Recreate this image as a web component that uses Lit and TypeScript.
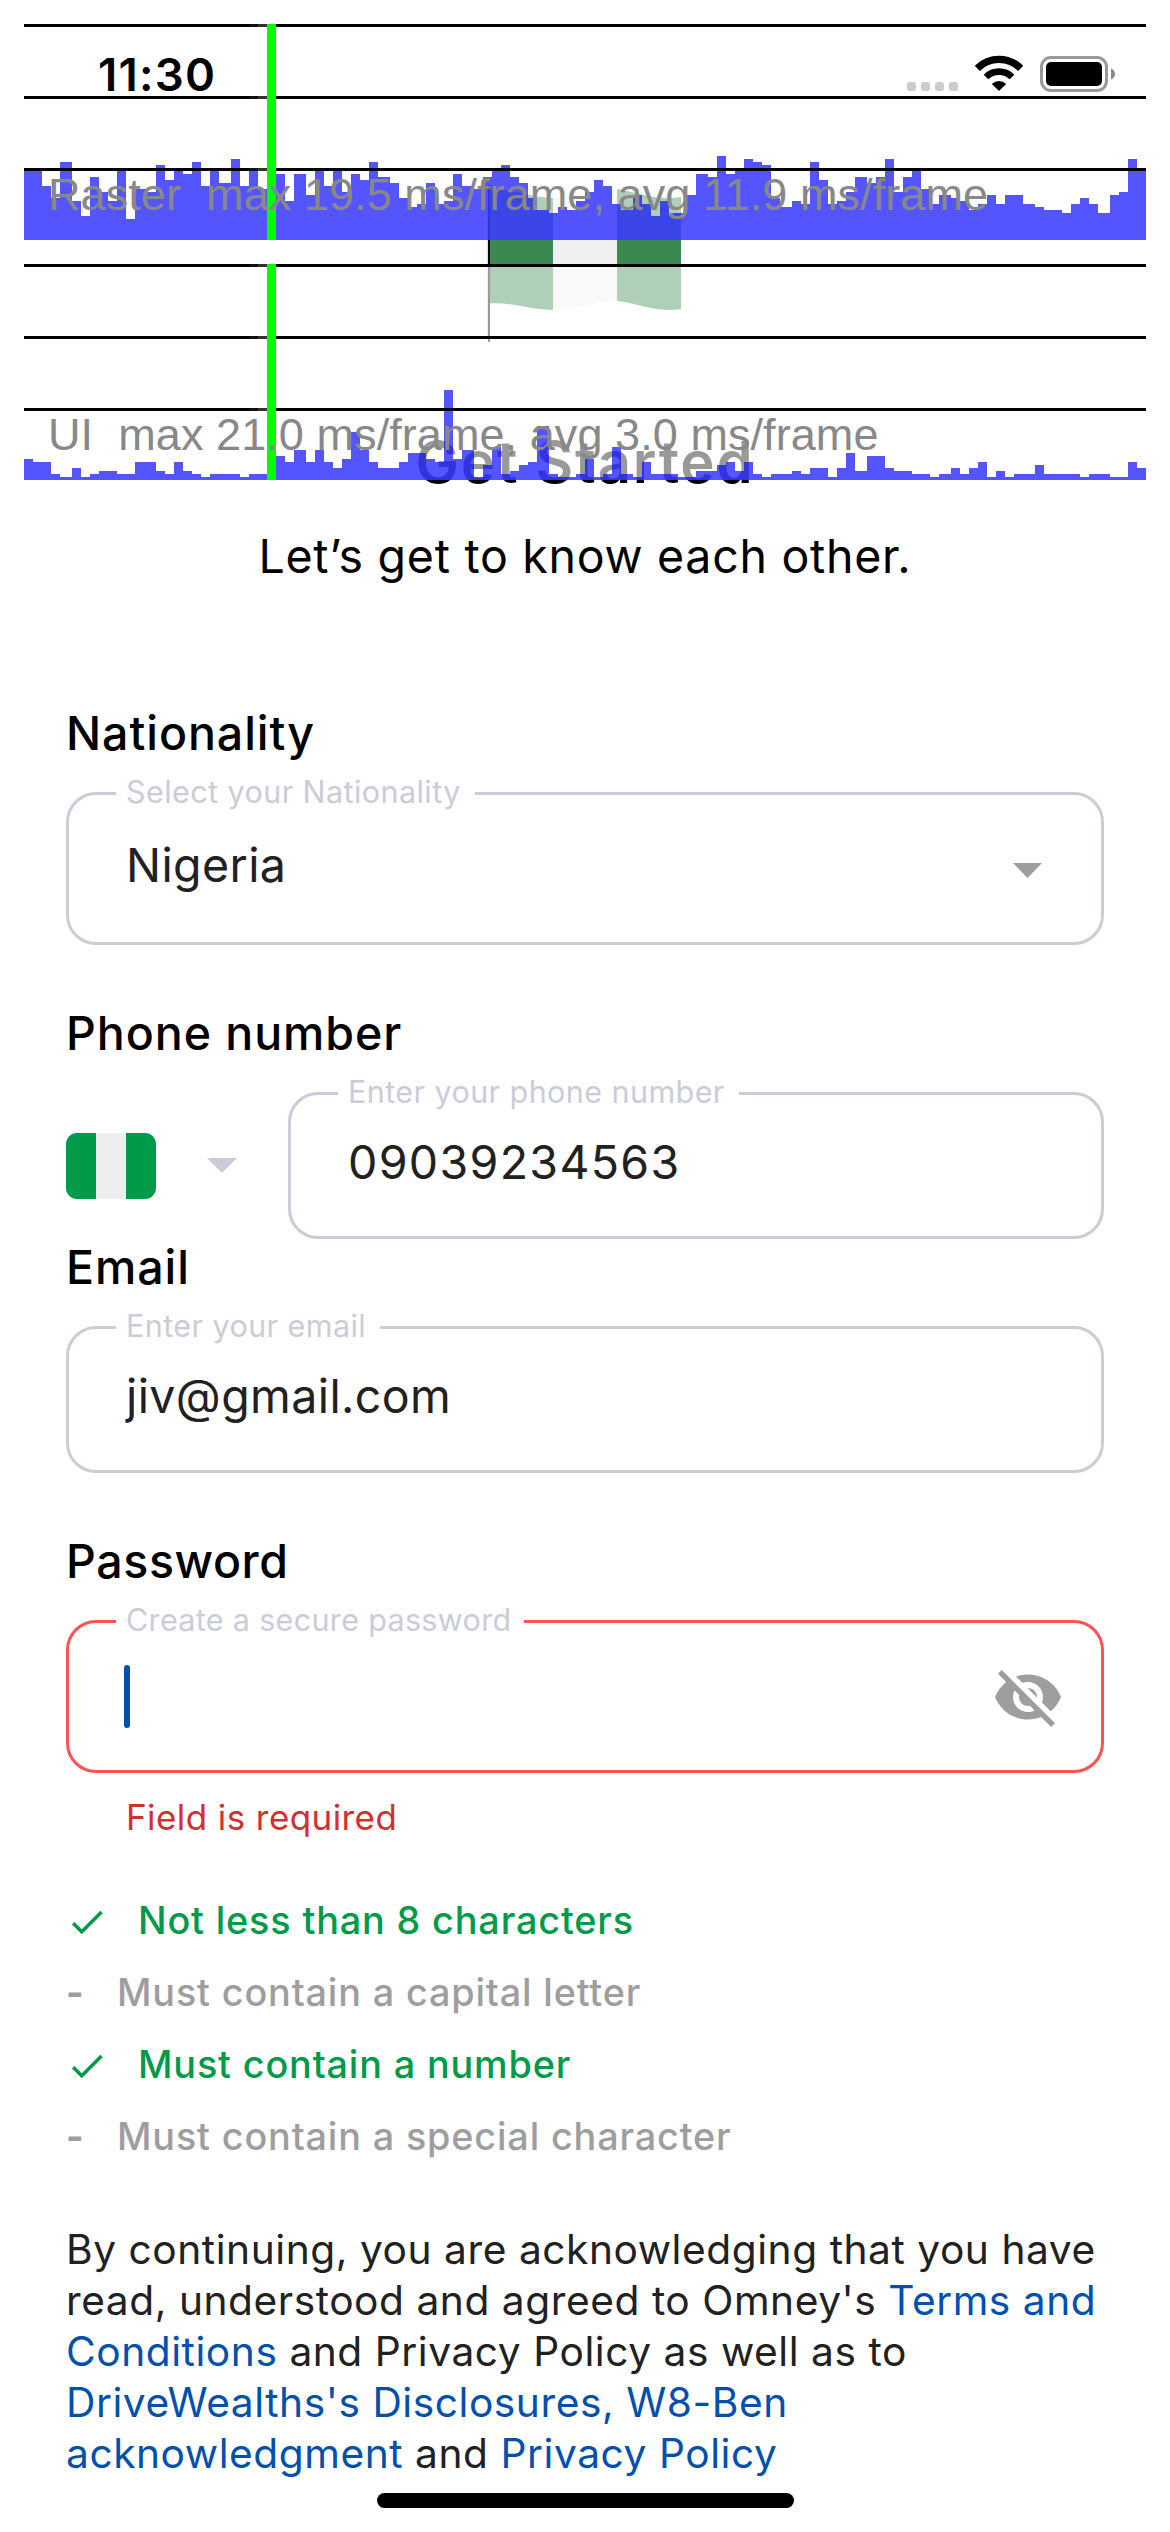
import { LitElement, html, svg, css } from "lit";
import { customElement, property } from "lit/decorators.js";
import { classMap } from "lit/directives/class-map.js";

const RASTER = [
  23, 23, 18, 14, 26, 13, 8, 21, 16, 13, 23, 7, 17, 16, 25, 20, 23, 22, 26, 18,
  23, 19, 27, 18, 23, 17, 0, 22, 13, 22, 15, 23, 18, 23, 16, 22, 20, 26, 21, 19,
  14, 11, 12, 19, 12, 13, 22, 18, 17, 21, 23, 25, 21, 19, 14, 10, 9, 11, 10, 13,
  16, 20, 18, 12, 10, 15, 12, 8, 13, 9, 9, 15, 22, 21, 28, 22, 23, 27, 26, 25,
  14, 11, 13, 12, 26, 20, 12, 13, 16, 21, 19, 21, 27, 16, 21, 23, 17, 12, 15, 14,
  13, 10, 12, 15, 12, 15, 15, 12, 11, 10, 10, 9, 12, 14, 12, 9, 15, 16, 27, 23,
];

const UI = [
  7, 6, 6, 2, 1, 4, 1, 2, 3, 3, 2, 2, 6, 6, 3, 2, 6, 3, 2, 1,
  2, 2, 2, 1, 2, 2, 0, 8, 6, 10, 6, 10, 6, 4, 7, 16, 10, 6, 4, 4,
  6, 9, 9, 7, 6, 30, 7, 10, 1, 5, 11, 2, 3, 5, 6, 18, 2, 1, 1, 2,
  7, 1, 2, 11, 2, 1, 6, 2, 2, 2, 1, 1, 3, 3, 5, 6, 3, 6, 2, 1,
  2, 2, 3, 2, 4, 4, 1, 4, 9, 3, 8, 8, 4, 3, 3, 2, 2, 1, 2, 4,
  2, 4, 6, 1, 3, 1, 2, 2, 5, 2, 2, 2, 2, 1, 2, 2, 1, 1, 6, 4,
];

const STEP = 1122 / 120;
const NOW = 26;
const snap = (i: number) => Math.round((i * STEP) / 3) * 3;

@customElement("frame-graph")
class FrameGraph extends LitElement {
  @property({ attribute: false }) samples: number[] = [];
  @property() label = "";

  static styles = css`
    :host { display: block; height: 216px; }
    svg { display: block; }
    .label { font: 45px "Liberation Sans", Arial, sans-serif; letter-spacing: 0.07px; fill: #888; white-space: pre; }
  `;

  render() {
    return html`<svg width="1122" height="216" viewBox="0 0 1122 216">
      <rect width="1122" height="216" fill="#fff" fill-opacity="0.6" />
      <g shape-rendering="crispEdges">
        ${this.samples.map((h, i) => svg`<rect x=${snap(i)} y=${216 - h * 3} width=${snap(i + 1) - snap(i)} height=${h * 3} fill="#00f" fill-opacity="0.667" />`)}
        ${[0, 72, 144].map((y) => svg`
          <rect x="0" y=${y} width="1122" height="3" fill="#000" />
          <rect x=${snap(NOW - 2)} y=${y} width="9" height="3" fill="#111" />
          <rect x=${snap(NOW - 1)} y=${y} width="9" height="3" fill="#333" />`)}
        <rect x=${snap(NOW)} y="0" width="9" height="216" fill="#0f0" />
      </g>
      <text class="label" x="24" y="186">${this.label}</text>
    </svg>`;
  }
}

@customElement("outlined-field")
class OutlinedField extends LitElement {
  @property() label = "";
  @property({ type: Boolean }) tall = false;
  @property({ type: Boolean }) error = false;

  static styles = css`
    :host { display: block; flex: 1; }
    .box {
      position: relative; box-sizing: border-box; display: flex; justify-content: space-between;
      height: 147px; padding: 39px 57px 0; border: 3px solid #caccd8; border-radius: 30px;
    }
    .box.tall { height: 153px; padding-top: 42px; }
    .box.error { border-color: #ff5252; padding-right: 37px; }
    .label {
      position: absolute; left: 47px; top: -22px; padding: 0 14px 0 10px; background: #fff;
      color: #caccd8; font-size: 30.5px; line-height: 37px; letter-spacing: 0.43px; white-space: nowrap;
    }
    .error .label { letter-spacing: 0.33px; padding-right: 13px; }
  `;

  render() {
    return html`<div class=${classMap({ box: true, tall: this.tall, error: this.error })}>
      <span class="label">${this.label}</span>
      <slot></slot>
    </div>`;
  }
}

const check = html`<svg class="check" width="42" height="42" viewBox="0 0 24 24" fill="currentColor">
  <path d="M9 16.17 4.83 12l-1.42 1.41L9 19 21 7l-1.41-1.41z" />
</svg>`;

const RULES = [
  { met: true, text: "Not less than 8 characters" },
  { met: false, text: "Must contain a capital letter" },
  { met: true, text: "Must contain a number" },
  { met: false, text: "Must contain a special character" },
];

@customElement("app-root")
class AppRoot extends LitElement {
  static styles = css`
    :host { display: block; }
    .page {
      position: relative; box-sizing: border-box; width: 1170px; height: 2532px; overflow: hidden;
      background: #fff; color: #000; font-family: Inter, "Liberation Sans", sans-serif;
      display: flex; flex-direction: column; font-kerning: normal;
    }
    .status {
      position: relative; z-index: 2; height: 184px; padding: 47px 55px 0 98px; box-sizing: border-box;
      display: flex; align-items: flex-start;
    }
    .time { font-size: 45.5px; line-height: 55px; font-weight: 600; letter-spacing: 1.27px; flex: 1; }
    .dots { display: flex; gap: 5px; margin: 35px 17px 0 0; }
    .dot { width: 9px; height: 9px; border-radius: 3px; background: #cbcbcb; }
    .wifi { margin: 8px 17px 0 0; }
    .battery { margin-top: 9px; }
    .overlay { position: absolute; z-index: 1; left: 24px; top: 24px; display: flex; flex-direction: column; gap: 24px; }
    .flag { display: block; margin: 0 0 0 486px; }
    h1 { margin: 85px 0 0; text-align: center; font-size: 58px; line-height: 70px; font-weight: 600; letter-spacing: 1.8px; }
    .sub { margin: 31px 0 0; text-align: center; font-size: 46.5px; line-height: 56px; letter-spacing: 0.72px; }
    form { margin: 121px 66px 0; display: flex; flex-direction: column; }
    h2 { margin: 0 0 31px; font-size: 46.5px; line-height: 56px; font-weight: 500; letter-spacing: 0.94px; }
    .gap { margin-top: 60px; }
    .snug { letter-spacing: 0.6px; }
    .value { font-size: 46.5px; line-height: 56px; color: #212121; letter-spacing: 0.4px; }
    .digits { letter-spacing: 1.32px; }
    .arrow { display: block; margin-top: 26px; margin-right: 2px; }
    .phone { display: flex; align-items: center; gap: 51px; }
    .country { display: flex; width: 90px; height: 66px; border-radius: 11px; overflow: hidden; background: linear-gradient(90deg, #009a49 30px, #eee 30px 60px, #009a49 60px); }
    .cursor { width: 6px; height: 63px; margin: 0 0 0 -2px; border-radius: 3px; background: #0050ac; }
    .eye { display: block; margin-top: -4px; }
    .message { margin: 23px 0 0 60px; font-size: 35px; line-height: 42px; letter-spacing: 0.42px; color: #d32f2f; }
    .rules { margin: 46px 0 0; padding: 0; list-style: none; font-size: 37.8px; line-height: 72px; font-weight: 500; letter-spacing: 0.84px; }
    .rule { display: flex; align-items: center; height: 72px; gap: 33px; color: #9e9e9e; }
    .rule.met { gap: 30px; color: #009a49; }
    .dash { width: 18px; font-weight: 700; }
    .check { display: block; margin-top: 4px; }
    .terms { margin: 52px 0 0; font-size: 40.7px; line-height: 51px; letter-spacing: 0.54px; color: #212121; white-space: nowrap; }
    a { color: #0050ac; text-decoration: none; }
    .home { width: 417px; height: 15px; margin: 14px auto 0; border-radius: 8px; background: #000; }
  `;

  render() {
    return html`<div class="page">
      <div class="status">
        <span class="time">11:30</span>
        <div class="dots">${[0, 1, 2, 3].map(() => html`<i class="dot"></i>`)}</div>
        <svg class="wifi" width="48" height="36" viewBox="0 0 48 36">
          <path d="M2.3 13.3A30.7 30.7 0 0 1 45.7 13.3" fill="none" stroke="#000" stroke-width="7.3" />
          <path d="M11 22A18.4 18.4 0 0 1 37 22" fill="none" stroke="#000" stroke-width="6.6" />
          <path d="M24 36 16.8 29A10.3 10.3 0 0 1 31.2 29Z" />
        </svg>
        <svg class="battery" width="75" height="36" viewBox="0 0 75 36">
          <rect x="1.5" y="1.5" width="65" height="33" rx="9.5" fill="none" stroke="#999" stroke-width="3" />
          <rect x="6" y="6" width="56" height="24" rx="5" />
          <path d="M71 12.5C76.3 14.5 76.3 21.5 71 23.5Z" fill="#888" />
        </svg>
      </div>

      <div class="overlay">
        <frame-graph .samples=${RASTER} label="Raster  max 19.5 ms/frame, avg 11.9 ms/frame"></frame-graph>
        <frame-graph .samples=${UI} label="UI  max 21.0 ms/frame, avg 3.0 ms/frame"></frame-graph>
      </div>

      <svg class="flag" width="198" height="158" viewBox="486 184 198 158">
        <path d="M490 190C514 188 532 198 553 198V310C532 310 514 302 490 303.5Z" fill="#3a8852" />
        <path d="M553 198C576 198 594 188.500 617 189.500V301C594 300 576 310 553 310Z" fill="#f0f0f0" />
        <path d="M617 189C637 192 655 201 681 197V309C655 313 637 303 617 301Z" fill="#3a8852" />
        <rect x="487" y="186" width="1" height="156" fill="#ddd" />
        <rect x="488" y="185" width="2" height="157" />
      </svg>

      <h1>Get Started</h1>
      <p class="sub">Let’s get to know each other.</p>

      <form>
        <h2>Nationality</h2>
        <outlined-field tall label="Select your Nationality">
          <span class="value">Nigeria</span>
          <svg class="arrow" width="29" height="15" viewBox="0 0 29 15"><path d="M0 0H29L14.500 15Z" fill="#9e9e9e" /></svg>
        </outlined-field>

        <h2 class="gap">Phone number</h2>
        <div class="phone">
          <span class="country"></span>
          <svg width="30" height="15" viewBox="0 0 30 15"><path d="M0 0H30L15 15Z" fill="#caccd8" /></svg>
          <outlined-field label="Enter your phone number"><span class="value digits">09039234563</span></outlined-field>
        </div>

        <h2>Email</h2>
        <outlined-field label="Enter your email"><span class="value">jiv@gmail.com</span></outlined-field>

        <h2 class="gap snug">Password</h2>
        <outlined-field tall error label="Create a secure password">
          <span class="cursor"></span>
          <svg class="eye" width="72" height="72" viewBox="0 0 24 24" fill="#9e9e9e">
            <path d="M12 7c2.760 0 5 2.240 5 5 0 .65-.13 1.260-.36 1.830l2.920 2.920c1.510-1.260 2.700-2.890 3.430-4.750-1.730-4.390-6-7.500-11-7.500-1.400 0-2.740.25-3.980.7l2.160 2.160C10.740 7.130 11.350 7 12 7zM2 4.270l2.280 2.280.46.46C3.080 8.300 1.780 10.020 1 12c1.730 4.390 6 7.500 11 7.500 1.550 0 3.030-.3 4.380-.84l.42.42L19.730 22 21 20.730 3.270 3 2 4.270zM7.530 9.800l1.550 1.550c-.05.21-.08.43-.08.65 0 1.660 1.340 3 3 3 .22 0 .44-.03.65-.08l1.550 1.550c-.67.33-1.410.53-2.200.53-2.760 0-5-2.240-5-5 0-.79.2-1.530.53-2.200zm4.310-.78l3.150 3.150.02-.16c0-1.660-1.340-3-3-3l-.17.01z" />
          </svg>
        </outlined-field>
        <p class="message">Field is required</p>

        <ul class="rules">
          ${RULES.map((r) => html`<li class=${classMap({ rule: true, met: r.met })}>
            ${r.met ? check : html`<span class="dash">-</span>`}<span>${r.text}</span>
          </li>`)}
        </ul>

        <p class="terms">By continuing, you are acknowledging that you have<br />read, understood and agreed to Omney's <a>Terms and<br />Conditions</a> and Privacy Policy as well as to<br /><a>DriveWealths's Disclosures, W8-Ben<br />acknowledgment</a> and <a>Privacy Policy</a></p>
      </form>
      <div class="home"></div>
    </div>`;
  }
}
